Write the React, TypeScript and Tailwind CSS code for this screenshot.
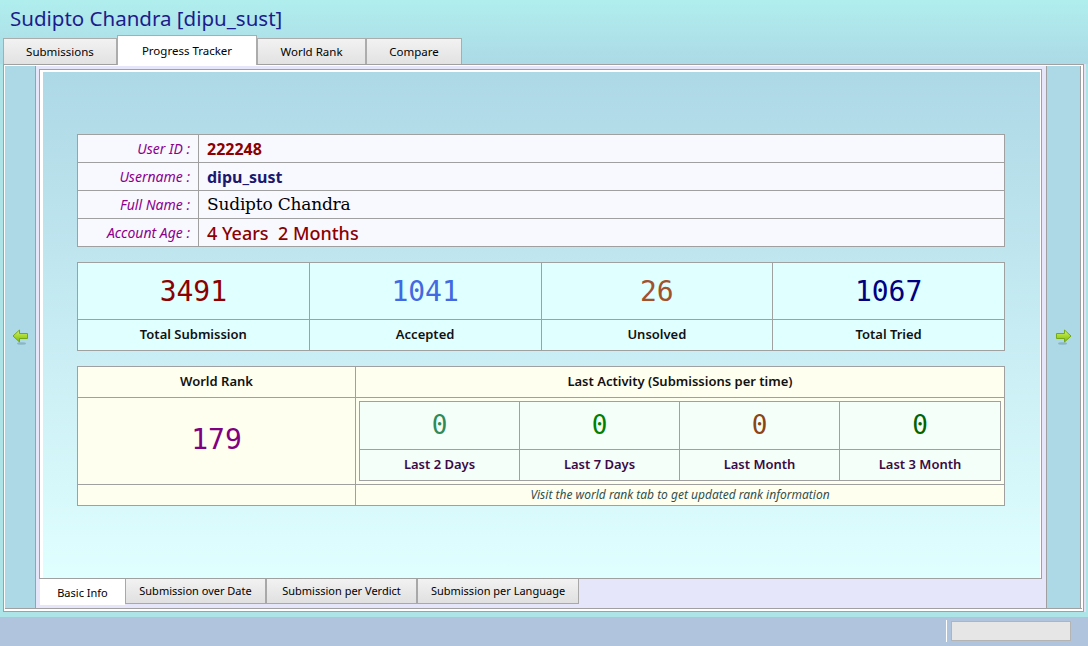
import React from 'react';

const topTabs = [
  { label: 'Submissions', w: 'w-[114px]', active: false },
  { label: 'Progress Tracker', w: 'w-[140px]', active: true },
  { label: 'World Rank', w: 'w-[109px]', active: false },
  { label: 'Compare', w: 'w-[96px]', active: false },
];

const bottomTabs = [
  { label: 'Basic Info', w: 'w-[85px]', active: true },
  { label: 'Submission over Date', w: 'w-[141px]', active: false },
  { label: 'Submission per Verdict', w: 'w-[151px]', active: false },
  { label: 'Submission per Language', w: 'w-[162px]', active: false },
];

const totals = [
  { value: '3491', label: 'Total Submission', color: 'text-[#8b0000]' },
  { value: '1041', label: 'Accepted', color: 'text-[#4169e1]' },
  { value: '26', label: 'Unsolved', color: 'text-[#a0522d]' },
  { value: '1067', label: 'Total Tried', color: 'text-[#000080]' },
];

const activity = [
  { value: '0', label: 'Last 2 Days', color: 'text-[#2e8b57]' },
  { value: '0', label: 'Last 7 Days', color: 'text-[#008000]' },
  { value: '0', label: 'Last Month', color: 'text-[#8b4513]' },
  { value: '0', label: 'Last 3 Month', color: 'text-[#006400]' },
];

const Arrow = ({ dir }: { dir: 'left' | 'right' }) => (
  <svg width="17" height="16" viewBox="0 0 17 16" className={dir === 'right' ? '-scale-x-100' : ''}>
    <defs>
      <linearGradient id={'arrow-' + dir} x1="0" y1="0" x2="0" y2="1">
        <stop offset="0" stopColor="#d8f27a" />
        <stop offset="0.5" stopColor="#a8d92e" />
        <stop offset="1" stopColor="#7cb814" />
      </linearGradient>
    </defs>
    <ellipse cx="9.5" cy="14.5" rx="4.5" ry="1.2" fill="#5f8f98" opacity="0.45" />
    <path
      d="M1 7 L7.5 1 V4.5 H15.5 V9.5 H7.5 V13 Z"
      fill={'url(#arrow-' + dir + ')'}
      stroke="#74a814"
      strokeWidth="1"
      strokeLinejoin="round"
    />
  </svg>
);

export default function App() {
  return (
    <div className="w-[1088px] h-[646px] flex flex-col overflow-hidden bg-[#ace4e8] font-['Noto_Sans',sans-serif]">
      {/* header + tabs */}
      <div className="bg-linear-to-b from-[#b0eeee] to-[#acdae6]">
        <div className="h-[36px] pl-[10px] flex items-center text-[20.5px] leading-none text-[#1c1c8c]">
          Sudipto Chandra [dipu_sust]
        </div>
        <div className="h-[28px] flex items-end pl-[3px]">
          {topTabs.map((t) =>
            t.active ? (
              <div
                key={t.label}
                className={`${t.w} h-[30px] -mb-px relative z-10 bg-white border border-b-0 border-[#acacac] flex items-center justify-center text-[11.5px] text-black`}
              >
                {t.label}
              </div>
            ) : (
              <div
                key={t.label}
                className={`${t.w} h-[26px] bg-linear-to-b from-[#f2f2f2] to-[#e2e2e2] border border-b-0 border-[#acacac] flex items-center justify-center text-[11.5px] text-black`}
              >
                {t.label}
              </div>
            )
          )}
        </div>
      </div>

      {/* main frame */}
      <div className="ml-[3px] w-[1081px] h-[548px] border border-[#a0a0a0] bg-white pt-px px-px pb-[2px] shadow-[2px_0_0_#e4e0f2]">
        <div className="h-full flex border-b border-[#a0a0a0]">
          <div className="w-[31px] bg-[#add8e6] border-r border-[#a0a0a0] flex items-center justify-center">
            <Arrow dir="left" />
          </div>

          <div className="w-[1010px] bg-[#e6e6fa] pt-[3px] pl-[3px] pr-[4px] flex flex-col">
            <div className="h-[510px] border border-[#a0a0a0] bg-white pt-[2px] pl-[3px] pr-px">
              <div className="h-[506px] bg-linear-to-b from-[#add8e6] to-[#e0ffff] pt-[62px] pl-[34px]">
                {/* basic info */}
                <div className="w-[928px] grid grid-cols-[121px_1fr] border-l border-t border-[#a0a0a0] bg-[#f8f8ff]">
                  {[
                    ['User ID :', <span className="text-[16px] font-bold text-[#8b0000]">222248</span>],
                    ['Username :', <span className="text-[16px] font-bold text-[#191970]">dipu_sust</span>],
                    [
                      'Full Name :',
                      <span className="text-[17px] text-black font-['DejaVu_Serif',serif] tracking-[-0.2px]">Sudipto Chandra</span>,
                    ],
                    ['Account Age :', <span className="text-[18px] font-medium text-[#8b0000] whitespace-pre">4 Years  2 Months</span>],
                  ].map(([k, v], i) => (
                    <React.Fragment key={i}>
                      <div className="h-[28px] border-r border-b border-[#a0a0a0] flex items-center justify-end pr-[8px] text-[14px] italic text-[#8b008b]">
                        {k}
                      </div>
                      <div className="h-[28px] border-r border-b border-[#a0a0a0] flex items-center pl-[8px] leading-none">
                        {v}
                      </div>
                    </React.Fragment>
                  ))}
                </div>

                {/* totals */}
                <div className="mt-[15px] w-[928px] grid grid-cols-4 border-l border-t border-[#a0a0a0] bg-[#e0ffff]">
                  {totals.map((t) => (
                    <div
                      key={'v' + t.label}
                      className={`h-[57px] border-r border-b border-[#a0a0a0] flex items-center justify-center pt-[2px] text-[28px] font-['DejaVu_Sans_Mono',monospace] ${t.color}`}
                    >
                      {t.value}
                    </div>
                  ))}
                  {totals.map((t) => (
                    <div
                      key={'l' + t.label}
                      className="h-[31px] border-r border-b border-[#a0a0a0] flex items-center justify-center text-[13px] font-semibold text-[#111]"
                    >
                      {t.label}
                    </div>
                  ))}
                </div>

                {/* rank + activity */}
                <div className="mt-[15px] w-[928px] grid grid-cols-[278px_1fr] border-l border-t border-[#a0a0a0] bg-[#fffff0]">
                  <div className="h-[31px] border-r border-b border-[#a0a0a0] flex items-center justify-center text-[13px] font-semibold text-[#111]">
                    World Rank
                  </div>
                  <div className="h-[31px] border-r border-b border-[#a0a0a0] flex items-center justify-center text-[13px] font-semibold text-[#111]">
                    Last Activity (Submissions per time)
                  </div>
                  <div className="h-[87px] border-r border-b border-[#a0a0a0] flex items-center justify-center pb-[2px] text-[28px] text-[#800080] font-['DejaVu_Sans_Mono',monospace]">
                    179
                  </div>
                  <div className="h-[87px] border-r border-b border-[#a0a0a0] p-[3px]">
                    <div className="grid grid-cols-[160px_160px_160px_1fr] border-l border-t border-[#a0a0a0] bg-[#f5fffa]">
                      {activity.map((a) => (
                        <div
                          key={'v' + a.label}
                          className={`h-[48px] border-r border-b border-[#a0a0a0] flex items-center justify-center text-[26px] font-['DejaVu_Sans_Mono',monospace] ${a.color}`}
                        >
                          {a.value}
                        </div>
                      ))}
                      {activity.map((a) => (
                        <div
                          key={'l' + a.label}
                          className="h-[31px] border-r border-b border-[#a0a0a0] flex items-center justify-center text-[13px] font-semibold text-[#3a0a45]"
                        >
                          {a.label}
                        </div>
                      ))}
                    </div>
                  </div>
                  <div className="h-[21px] border-r border-b border-[#a0a0a0]" />
                  <div className="h-[21px] border-r border-b border-[#a0a0a0] flex items-center justify-center text-[12px] italic text-[#2f4f4f]">
                    Visit the world rank tab to get updated rank information
                  </div>
                </div>
              </div>
            </div>

            <div className="h-[26px] flex items-start ml-px">
              {bottomTabs.map((t) =>
                t.active ? (
                  <div
                    key={t.label}
                    className={`${t.w} h-[26px] bg-white flex items-center justify-center pt-[2px] text-[11px] text-black`}
                  >
                    {t.label}
                  </div>
                ) : (
                  <div
                    key={t.label}
                    className={`${t.w} h-[25px] bg-linear-to-b from-[#f2f2f2] to-[#e0e0e0] border-x border-b border-[#a8a8a8] flex items-center justify-center text-[11px] text-black`}
                  >
                    {t.label}
                  </div>
                )
              )}
            </div>
          </div>

          <div className="w-[35px] mr-px bg-[#add8e6] border-x border-[#a0a0a0] flex items-center justify-center">
            <Arrow dir="right" />
          </div>
        </div>
      </div>

      {/* status bar */}
      <div className="mt-[5px] flex-1 bg-[#b0c4de] flex items-start pt-[3px]">
        <div className="ml-[946px] w-px h-[22px] bg-white" />
        <div className="ml-[4px] mt-px w-[120px] h-[20px] bg-[#e6e6e6] border border-[#b4b4b4]" />
      </div>
    </div>
  );
}
